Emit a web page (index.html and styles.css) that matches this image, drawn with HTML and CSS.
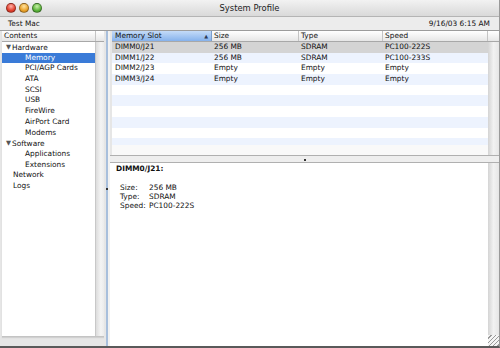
FILE: index.html
```html
<!DOCTYPE html>
<html lang="en">

<head>
    <meta charset="UTF-8">
    <meta name="viewport" content="width=device-width, initial-scale=1.0">
    <link rel="stylesheet" href="styles.css">
    <title>System Profile</title>
</head>

<body>
    <div class="window">
        <div class="titlebar">
            <div class="lights">
                <span class="light red"></span>
                <span class="light yellow"></span>
                <span class="light green"></span>
            </div>
            <div class="title">System Profile</div>
            <div class="spacer"></div>
        </div>

        <div class="toolbar">
            <span>Test Mac</span>
            <span>9/16/03 6:15 AM</span>
        </div>

        <div class="main">
            <div class="sidebar">
                <div class="side-box">
                    <div class="side-head">
                        <div class="hcell">Contents</div>
                        <div class="hcorner"></div>
                    </div>
                    <div class="side-body">
                        <ul class="tree">
                            <li class="group"><span class="tri">&#9660;</span>Hardware</li>
                            <li class="child selected">Memory</li>
                            <li class="child">PCI/AGP Cards</li>
                            <li class="child">ATA</li>
                            <li class="child">SCSI</li>
                            <li class="child">USB</li>
                            <li class="child">FireWire</li>
                            <li class="child">AirPort Card</li>
                            <li class="child">Modems</li>
                            <li class="group"><span class="tri">&#9660;</span>Software</li>
                            <li class="child">Applications</li>
                            <li class="child">Extensions</li>
                            <li class="top">Network</li>
                            <li class="top">Logs</li>
                        </ul>
                        <div class="track"></div>
                    </div>
                </div>
            </div>

            <div class="vsplit"><span class="grip"></span></div>

            <div class="content">
                <div class="table-pane">
                    <div class="table">
                        <div class="row head">
                            <div class="cell sorted">Memory Slot<span class="sort">&#9650;</span></div>
                            <div class="cell">Size</div>
                            <div class="cell">Type</div>
                            <div class="cell">Speed</div>
                        </div>
                        <div class="rows">
                            <div class="row picked">
                                <div class="cell">DIMM0/J21</div>
                                <div class="cell">256 MB</div>
                                <div class="cell">SDRAM</div>
                                <div class="cell">PC100-222S</div>
                            </div>
                            <div class="row">
                                <div class="cell">DIMM1/J22</div>
                                <div class="cell">256 MB</div>
                                <div class="cell">SDRAM</div>
                                <div class="cell">PC100-233S</div>
                            </div>
                            <div class="row">
                                <div class="cell">DIMM2/J23</div>
                                <div class="cell">Empty</div>
                                <div class="cell">Empty</div>
                                <div class="cell">Empty</div>
                            </div>
                            <div class="row">
                                <div class="cell">DIMM3/J24</div>
                                <div class="cell">Empty</div>
                                <div class="cell">Empty</div>
                                <div class="cell">Empty</div>
                            </div>
                            <div class="row"></div>
                            <div class="row"></div>
                            <div class="row"></div>
                            <div class="row"></div>
                            <div class="row"></div>
                            <div class="row"></div>
                        </div>
                    </div>
                    <div class="vscroll">
                        <div class="corner"></div>
                        <div class="bar"></div>
                    </div>
                </div>

                <div class="hsplit"><span class="grip"></span></div>

                <div class="detail">
                    <div class="detail-body">
                        <p class="detail-title">DIMM0/J21:</p>
                        <dl class="props">
                            <dt>Size:</dt><dd>256 MB</dd>
                            <dt>Type:</dt><dd>SDRAM</dd>
                            <dt>Speed:</dt><dd>PC100-222S</dd>
                        </dl>
                    </div>
                    <div class="vscroll">
                        <div class="bar"></div>
                        <div class="resize"></div>
                    </div>
                </div>
            </div>
        </div>
    </div>
</body>

</html>
```

FILE: styles.css
```css
* {
    margin: 0;
    padding: 0;
    box-sizing: border-box;
}

body {
    width: 500px;
    height: 348px;
    overflow: hidden;
    background: #e6e6e6;
    font-family: "DejaVu Sans", sans-serif;
    font-size: 7.4px;
    color: #111;
}

.window {
    height: 348px;
    display: flex;
    flex-direction: column;
    border-right: 1px solid #9a9a9a;
    border-bottom: 2px solid #5a5a5a;
}

/* title bar */
.titlebar {
    height: 17px;
    flex: none;
    display: flex;
    align-items: center;
    background: linear-gradient(#f2f2f2, #d9d9d9);
    border-bottom: 1px solid #b4b4b4;
}

.lights {
    width: 44px;
    display: flex;
    gap: 3px;
    padding-left: 6px;
}

.light {
    width: 10px;
    height: 10px;
    border-radius: 50%;
    border: 1px solid rgba(0, 0, 0, 0.35);
}

.red {
    background: radial-gradient(circle at 50% 30%, #ffb3a8, #e2412f 60%, #a8261a);
}

.yellow {
    background: radial-gradient(circle at 50% 30%, #ffe3a0, #eaa42c 60%, #b0701a);
}

.green {
    background: radial-gradient(circle at 50% 30%, #c8f0a8, #5db53c 60%, #357a22);
}

.title {
    flex: 1;
    text-align: center;
    font-size: 8.4px;
    color: #222;
}

.spacer {
    width: 44px;
}

.toolbar {
    height: 14px;
    flex: none;
    display: flex;
    justify-content: space-between;
    align-items: center;
    padding: 0 9px 0 8px;
    background: #ececec;
    border-bottom: 1px solid #9c9c9c;
}

.main {
    flex: 1;
    display: flex;
    min-height: 0;
}

/* left list */
.sidebar {
    width: 104px;
    display: flex;
    padding: 0 0 9px 2px;
}

.side-box {
    flex: 1;
    display: flex;
    flex-direction: column;
    background: #fff;
    border-bottom: 1px solid #c4c4c4;
    box-shadow: 0 1px 1px #d0d0d0;
}

.side-head {
    height: 11px;
    display: flex;
    background: linear-gradient(#ffffff, #e6e6e6);
    border-bottom: 1px solid #a8a8a8;
}

.hcell {
    width: 94px;
    padding-left: 2px;
    line-height: 10px;
    border-right: 1px solid #c4c4c4;
}

.hcorner {
    flex: 1;
}

.side-body {
    flex: 1;
    display: flex;
}

.tree {
    width: 94px;
    list-style: none;
    border-right: 1px solid #c8c8c8;
}

.tree li {
    height: 10.7px;
    line-height: 10.7px;
    white-space: nowrap;
}

.group {
    padding-left: 4px;
}

.tri {
    font-size: 6.5px;
    color: #555;
    margin-right: 1px;
    vertical-align: 0.5px;
}

.child {
    padding-left: 23px;
}

.top {
    padding-left: 11px;
}

.selected {
    background: #3a7bd8;
    color: #fff;
}

.track {
    flex: 1;
    background: linear-gradient(to right, #dcdcdc, #f4f4f4 60%, #ececec);
}

/* splitters */
.vsplit {
    width: 6px;
    display: flex;
    align-items: center;
    justify-content: center;
    background: linear-gradient(to right, #e6e6e6 2px, #a8bfdc 2px, #a8bfdc 4px, #f2f2f2 4px);
}

.grip {
    width: 2px;
    height: 2px;
    background: #333;
}

.hsplit {
    height: 6px;
    flex: none;
    display: flex;
    align-items: flex-end;
    justify-content: center;
    padding-bottom: 1px;
    background: #eeeeee;
}

/* right side */
.content {
    flex: 1;
    display: flex;
    flex-direction: column;
    min-width: 0;
}

.table-pane {
    height: 125px;
    flex: none;
    display: flex;
    padding-left: 2px;
    border-bottom: 1px solid #b0b0b0;
}

.table {
    flex: 1;
    display: flex;
    flex-direction: column;
    background: #f9f9f9;
    padding-bottom: 10px;
}

.rows {
    flex: 1;
    overflow: hidden;
    background: #fff;
}

.row {
    display: grid;
    grid-template-columns: 100px 87px 84px 1fr;
    height: 10.7px;
    line-height: 10.7px;
}

.rows .row:nth-child(even) {
    background: #edf3fe;
}

.rows .row.picked {
    background: #d4d4d4;
}

.row.head {
    height: 11px;
    line-height: 10px;
    background: linear-gradient(#ffffff, #e6e6e6);
    border-bottom: 1px solid #a8a8a8;
}

.cell {
    padding-left: 2px;
    white-space: nowrap;
}

.cell:first-child {
    padding-left: 3px;
}

.head .cell {
    border-right: 1px solid #c4c4c4;
}

.head .sorted {
    display: flex;
    justify-content: space-between;
    padding-right: 3px;
    background: linear-gradient(#c4dbf8, #86b2ec);
    border-right-color: #7c9fcc;
}

.sort {
    font-size: 5px;
    color: #2b3a55;
}

.vscroll {
    width: 11px;
    flex: none;
    display: flex;
    flex-direction: column;
}

.corner {
    height: 11px;
    background: linear-gradient(#ffffff, #e6e6e6);
    border-bottom: 1px solid #a8a8a8;
}

.bar {
    flex: 1;
    background: linear-gradient(to right, #d4d4d4, #f2f2f2 50%, #e6e6e6);
}

.detail {
    flex: 1;
    display: flex;
    border-top: 1px solid #b0b0b0;
}

.detail-body {
    flex: 1;
    background: #fff;
    padding: 1px 6px;
    line-height: 9.3px;
}

.detail-title {
    font-weight: bold;
    margin-bottom: 9.3px;
}

.props {
    display: grid;
    grid-template-columns: 29px 1fr;
    padding-left: 4px;
}

.resize {
    height: 11px;
    background: repeating-linear-gradient(135deg, #f4f4f4 0 2px, #9a9a9a 2px 3px);
}
```
